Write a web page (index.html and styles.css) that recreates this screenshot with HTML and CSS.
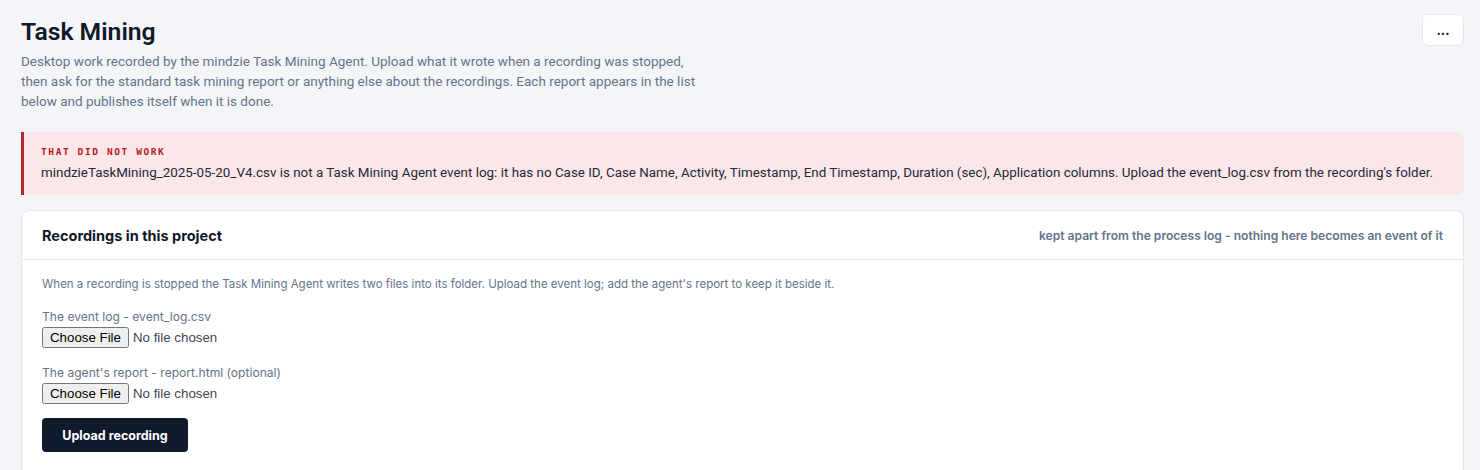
FILE: index.html
```html
<!DOCTYPE html>
<html lang="en">
<head>
    <meta charset="UTF-8">
    <meta name="viewport" content="width=device-width, initial-scale=1.0">
    <title>Task Mining</title>
    <link rel="stylesheet" href="styles.css">
</head>
<body>
    <div class="page">
        <!-- Page header -->
        <div class="page-header">
            <div class="intro">
                <h1>Task Mining</h1>
                <p>Desktop work recorded by the mindzie Task Mining Agent. Upload what it wrote when a recording was stopped, then ask for the standard task mining report or anything else about the recordings. Each report appears in the list below and publishes itself when it is done.</p>
            </div>
            <button class="more-btn">...</button>
        </div>

        <!-- Upload error -->
        <div class="alert">
            <div class="alert-title">THAT DID NOT WORK</div>
            <div class="alert-text">mindzieTaskMining_2025-05-20_V4.csv is not a Task Mining Agent event log: it has no Case ID, Case Name, Activity, Timestamp, End Timestamp, Duration (sec), Application columns. Upload the event_log.csv from the recording's folder.</div>
        </div>

        <!-- Recordings card -->
        <div class="card">
            <div class="card-header">
                <h2>Recordings in this project</h2>
                <span class="card-note">kept apart from the process log - nothing here becomes an event of it</span>
            </div>
            <div class="card-body">
                <p class="hint">When a recording is stopped the Task Mining Agent writes two files into its folder. Upload the event log; add the agent's report to keep it beside it.</p>
                <label class="field">
                    <span>The event log - event_log.csv</span>
                    <input type="file" accept=".csv">
                </label>
                <label class="field">
                    <span>The agent's report - report.html (optional)</span>
                    <input type="file" accept=".html">
                </label>
                <button class="upload-btn">Upload recording</button>
            </div>
        </div>
    </div>
</body>
</html>
```

FILE: styles.css
```css
/* Global styling */
* {
    margin: 0;
    padding: 0;
    box-sizing: border-box;
}
body {
    background-color: #f4f5f9;
    color: #0f172a;
    font-family: Inter, "Noto Sans", sans-serif;
}
.page {
    padding: 14px 16px 0 21px;
}

/* Header */
.page-header {
    display: flex;
    justify-content: space-between;
    align-items: flex-start;
}
.intro h1 {
    font-family: Roboto, Inter, sans-serif;
    font-size: 24.7px;
    font-weight: 600;
    line-height: 36px;
    color: #111827;
}
.intro p {
    font-family: Roboto, Inter, sans-serif;
    max-width: 690px;
    margin-top: 1px;
    font-size: 13.5px;
    line-height: 20px;
    color: #64748b;
}
.more-btn {
    width: 42px;
    height: 32px;
    background-color: #fff;
    border: 1px solid #e2e8f0;
    border-radius: 6px;
    font-family: Inter, sans-serif;
    font-weight: 700;
    font-size: 13px;
    color: #0f172a;
    cursor: pointer;
}

/* Error banner */
.alert {
    margin-top: 21px;
    padding: 14px 20px 12px 17px;
    background-color: #fbe7e8;
    border-left: 3px solid #b3262d;
    border-radius: 0 8px 8px 0;
}
.alert-title {
    font-family: "DejaVu Sans Mono", monospace;
    font-size: 9.5px;
    font-weight: 700;
    letter-spacing: 1.6px;
    color: #b91c1c;
}
.alert-text {
    font-family: Roboto, Inter, sans-serif;
    margin-top: 6px;
    font-size: 13.4px;
    line-height: 20px;
    color: #1e293b;
}

/* Card */
.card {
    margin-top: 15px;
    background-color: #fff;
    border: 1px solid #e2e8f0;
    border-radius: 8px;
}
.card-header {
    display: flex;
    justify-content: space-between;
    align-items: center;
    height: 49px;
    padding: 0 20px 0 20px;
    border-bottom: 1px solid #e2e8f0;
}
.card-header h2 {
    font-size: 14.5px;
    font-weight: 700;
    color: #0f172a;
}
.card-note {
    font-size: 12.1px;
    font-weight: 600;
    color: #64748b;
}
.card-body {
    padding: 16px 20px 24px 20px;
}
.hint {
    font-size: 11.5px;
    line-height: 16px;
    color: #64748b;
}
.field {
    display: flex;
    flex-direction: column;
    align-items: flex-start;
    margin-top: 17px;
}
.field span {
    font-size: 12.1px;
    line-height: 16px;
    color: #64748b;
}
.field input {
    margin-top: 2px;
    font-family: "Liberation Sans", Arial, sans-serif;
    font-size: 13.3px;
    color: #3f4650;
}
.upload-btn {
    margin-top: 14px;
    width: 146px;
    height: 34px;
    background-color: #0f1b2d;
    border: none;
    border-radius: 4px;
    font-family: Inter, sans-serif;
    font-size: 12.5px;
    font-weight: 700;
    color: #fff;
    cursor: pointer;
}
```
